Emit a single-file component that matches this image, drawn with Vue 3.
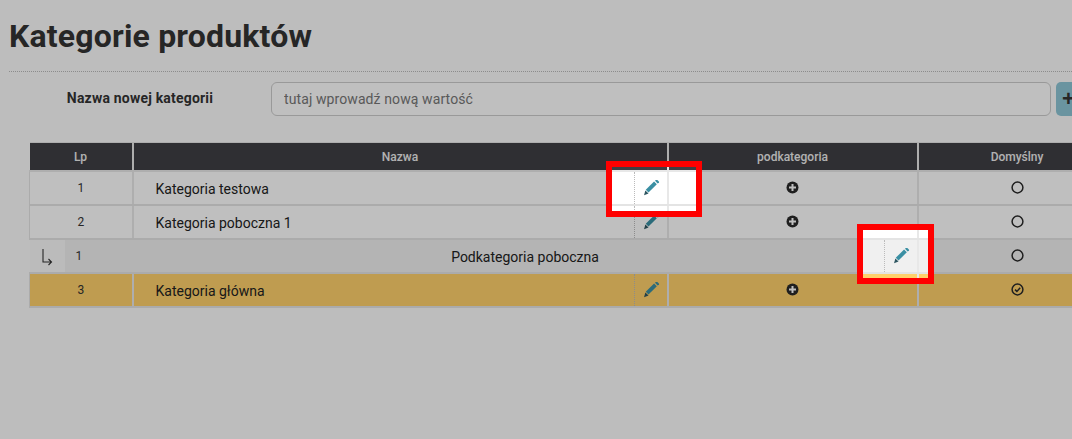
<script setup>
const rows = [
  { lp: 1, name: 'Kategoria testowa', kind: 'plain', checked: false },
  { lp: 2, name: 'Kategoria poboczna 1', kind: 'plain', checked: false },
  { lp: 1, name: 'Podkategoria poboczna', kind: 'child', checked: false },
  { lp: 3, name: 'Kategoria główna', kind: 'main', checked: true },
]
const pencilBody = 'M10.4 1.4 L13 4 L5.2 11.8 L2.6 9.2 Z'
</script>

<template>
  <div class="page">
    <h1 class="title">Kategorie produktów</h1>
    <form class="new-form" @submit.prevent>
      <label class="new-label">Nazwa nowej kategorii</label>
      <input class="new-input" placeholder="tutaj wprowadź nową wartość" />
      <button class="new-btn" type="button">+</button>
    </form>

    <table class="grid">
      <colgroup>
        <col class="c-arrow" /><col class="c-lp" /><col class="c-name" /><col class="c-sub" /><col class="c-def" />
      </colgroup>
      <thead>
        <tr>
          <th colspan="2">Lp</th>
          <th>Nazwa</th>
          <th>podkategoria</th>
          <th>Domyślny</th>
        </tr>
      </thead>
      <tbody>
        <tr v-for="row in rows" :key="row.name" :class="row.kind">
          <template v-if="row.kind === 'child'">
            <td class="arrow-cell">
              <svg width="12" height="19" viewBox="0 0 12 19" fill="none" stroke="#333" stroke-width="1.1">
                <path d="M2 2 V15 H10.5 M7.5 12 L10.5 15 L7.5 18" />
              </svg>
            </td>
            <td class="lp-child">{{ row.lp }}</td>
            <td colspan="2" class="name-cell">
              <div class="name-wrap">
                <span class="name-text centered">{{ row.name }}</span>
                <span class="edit">
                  <svg width="17" height="17" viewBox="0 0 16 16"><path :d="pencilBody" fill="#3a8fa3" /><path d="M11.3 .6 L12.2 -.2 Q13 -.4 13.8 .3 L14.9 1.4 Q15.3 2 15 2.6 L13.8 3.2 Z" fill="#3a8fa3" /><path d="M2.2 9.8 L5.2 12.8 L1 14.4 Z" fill="#2d5560" /></svg>
                </span>
              </div>
            </td>
          </template>
          <template v-else>
            <td colspan="2" class="lp">{{ row.lp }}</td>
            <td class="name-cell">
              <div class="name-wrap">
                <span class="name-text">{{ row.name }}</span>
                <span class="edit">
                  <svg width="17" height="17" viewBox="0 0 16 16"><path :d="pencilBody" fill="#3a8fa3" /><path d="M11.3 .6 L12.2 -.2 Q13 -.4 13.8 .3 L14.9 1.4 Q15.3 2 15 2.6 L13.8 3.2 Z" fill="#3a8fa3" /><path d="M2.2 9.8 L5.2 12.8 L1 14.4 Z" fill="#2d5560" /></svg>
                </span>
              </div>
            </td>
            <td class="icon-cell">
              <svg width="13" height="13" viewBox="0 0 13 13"><circle cx="6.5" cy="6.5" r="6" fill="#2a2a2a" /><path d="M6.5 3 V10 M3 6.5 H10" stroke="#fff" stroke-width="2" /></svg>
            </td>
          </template>
          <td class="icon-cell">
            <svg width="13" height="13" viewBox="0 0 13 13" fill="none" stroke="#2a2a2a">
              <circle cx="6.5" cy="6.5" r="5.4" stroke-width="1.5" />
              <path v-if="row.checked" d="M4 6.6 L5.9 8.4 L9.2 4.8" stroke-width="1.5" />
            </svg>
          </td>
        </tr>
      </tbody>
    </table>

    <svg class="dim" width="1072" height="439" viewBox="0 0 1072 439">
      <path fill-rule="evenodd" fill="rgba(0,0,0,.25)" d="M0 0H1072V439H0Z M612 167H696V211H612Z M863 230H928V278H863Z" />
    </svg>
    <div class="callout one"></div>
    <div class="callout two"></div>
  </div>
</template>

<style>
html, body { margin: 0; background: #fff; overflow: hidden; }
</style>

<style scoped>
.page {
  position: relative;
  width: 1072px;
  height: 439px;
  overflow: hidden;
  box-sizing: border-box;
  padding-left: 9px;
  background: #fdfdfd;
  font-family: Roboto, sans-serif;
  color: #333;
}
.title {
  margin: 0;
  height: 72px;
  box-sizing: border-box;
  padding-top: 16px;
  border-bottom: 1px dotted #bbb;
  font-size: 32px;
  line-height: 40px;
  font-weight: 700;
  letter-spacing: .18px;
  color: #333;
}
.new-form {
  display: flex;
  align-items: flex-start;
  padding-top: 10px;
  height: 60px;
}
.new-label {
  width: 262px;
  flex: none;
  text-align: center;
  font-size: 14px;
  font-weight: 700;
  line-height: 34px;
  margin-top: -1px;
  letter-spacing: .2px;
}
.new-input {
  width: 780px;
  flex: none;
  height: 34px;
  box-sizing: border-box;
  border: 1px solid #ccc;
  border-radius: 6px;
  padding: 0 12px;
  font: 14px Roboto, sans-serif;
  background: #fff;
  outline: none;
}
.new-input::placeholder { color: #777; letter-spacing: .1px; }
.new-btn {
  margin-left: 5px;
  width: 40px;
  flex: none;
  height: 34px;
  border: 0;
  border-radius: 5px;
  background: #8ec6d6;
  font-size: 22px;
  font-weight: 700;
  color: #333;
  padding: 0;
  text-align: left;
  text-indent: 6px;
}
.grid {
  margin-left: 20px;
  width: 1087px;
  table-layout: fixed;
  border-collapse: collapse;
  font-size: 14px;
}
.c-arrow { width: 35px; }
.c-lp { width: 68px; }
.c-name { width: 535px; }
.c-sub { width: 250px; }
.c-def { width: 199px; }
th {
  background: #3f3f44;
  color: #eee;
  height: 27px;
  padding: 0;
  font-size: 12px;
  font-weight: 500;
  border-right: 2px solid #e8e8e8;
  border-top: 1px solid #e8e8e8;
  border-bottom: 2px solid #e8e8e8;
}
td {
  padding: 0;
  height: 32px;
  text-align: center;
  border-right: 2px solid #e8e8e8;
  border-bottom: 2px solid #e4e4e4;
  background: #fff;
}
td.lp { border-left: 1px solid #e4e4e4; font-size: 12px; }
.child td { background: #f0f0f0; }
.child td.arrow-cell { background: #fafafa; border-right: 0; }
.child td.lp-child { text-align: left; padding-left: 11px; font-size: 12px; border-right: 0; }
.child td.arrow-cell svg { display: block; margin: 0 0 0 11px; }
.main td { background: #ffd06b; }
.name-wrap { display: flex; align-items: stretch; height: 32px; }
.name-text {
  flex: 1;
  text-align: left;
  padding-left: 22px;
  line-height: 34px;
  color: #222;
}
.name-text.centered { text-align: center; padding-left: 34px; }
.edit {
  width: 33px;
  flex: none;
  border-left: 1px dotted #bbb;
  display: flex;
  align-items: center;
  justify-content: center;
  padding-left: 1px;
  box-sizing: border-box;
}
.edit svg { display: block; }
.icon-cell { padding-bottom: 2px; box-sizing: border-box; }
.icon-cell svg { display: block; margin: 0 auto; }
.dim { position: absolute; left: 0; top: 0; pointer-events: none; }
.callout {
  position: absolute;
  border: 6px solid #f00;
  box-sizing: border-box;
}
.one { left: 606px; top: 161px; width: 96px; height: 56px; }
.two { left: 857px; top: 224px; width: 77px; height: 60px; }
</style>
